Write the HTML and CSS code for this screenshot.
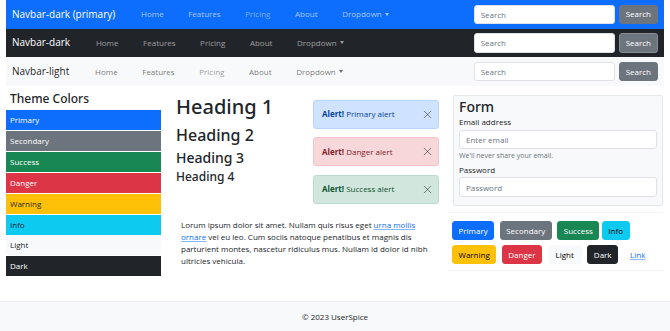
FILE: index.html
```html
<!DOCTYPE html>
<html lang="en">
<head>
<meta charset="utf-8">
<title>UserSpice Theme</title>
<link rel="stylesheet" href="styles.css">
</head>
<body>
<div class="page">
  <header class="navbars">
    <nav class="navbar navbar-primary">
      <a class="brand" href="#">Navbar-dark (primary)</a>
      <ul class="nav">
        <li><a class="nav-link" href="#">Home</a></li>
        <li><a class="nav-link" href="#">Features</a></li>
        <li><a class="nav-link disabled" href="#">Pricing</a></li>
        <li><a class="nav-link" href="#">About</a></li>
        <li><a class="nav-link caret" href="#">Dropdown</a></li>
      </ul>
      <form class="search">
        <input class="search-input" type="search" placeholder="Search">
        <button class="search-btn" type="button">Search</button>
      </form>
    </nav>
    <nav class="navbar navbar-dark">
      <a class="brand" href="#">Navbar-dark</a>
      <ul class="nav">
        <li><a class="nav-link" href="#">Home</a></li>
        <li><a class="nav-link" href="#">Features</a></li>
        <li><a class="nav-link" href="#">Pricing</a></li>
        <li><a class="nav-link" href="#">About</a></li>
        <li><a class="nav-link caret" href="#">Dropdown</a></li>
      </ul>
      <form class="search">
        <input class="search-input" type="search" placeholder="Search">
        <button class="search-btn" type="button">Search</button>
      </form>
    </nav>
    <nav class="navbar navbar-light">
      <a class="brand" href="#">Navbar-light</a>
      <ul class="nav">
        <li><a class="nav-link" href="#">Home</a></li>
        <li><a class="nav-link" href="#">Features</a></li>
        <li><a class="nav-link disabled" href="#">Pricing</a></li>
        <li><a class="nav-link" href="#">About</a></li>
        <li><a class="nav-link caret" href="#">Dropdown</a></li>
      </ul>
      <form class="search">
        <input class="search-input" type="search" placeholder="Search">
        <button class="search-btn" type="button">Search</button>
      </form>
    </nav>
  </header>

  <main class="main">
    <aside class="sidebar">
      <h4 class="sidebar-title">Theme Colors</h4>
      <div class="swatch bg-primary">Primary</div>
      <div class="swatch bg-secondary">Secondary</div>
      <div class="swatch bg-success">Success</div>
      <div class="swatch bg-danger">Danger</div>
      <div class="swatch bg-warning">Warning</div>
      <div class="swatch bg-info">Info</div>
      <div class="swatch bg-light">Light</div>
      <div class="swatch bg-dark">Dark</div>
    </aside>

    <section class="content">
      <div class="headings">
        <h1>Heading 1</h1>
        <h2>Heading 2</h2>
        <h3>Heading 3</h3>
        <h4>Heading 4</h4>
      </div>

      <div class="alerts">
        <div class="alert alert-primary"><span><strong>Alert!</strong> Primary alert</span><span class="close"><svg viewBox="0 0 10 10" width="9" height="9"><path d="M1 1L9 9M9 1L1 9" /></svg></span></div>
        <div class="alert alert-danger"><span><strong>Alert!</strong> Danger alert</span><span class="close"><svg viewBox="0 0 10 10" width="9" height="9"><path d="M1 1L9 9M9 1L1 9" /></svg></span></div>
        <div class="alert alert-success"><span><strong>Alert!</strong> Success alert</span><span class="close"><svg viewBox="0 0 10 10" width="9" height="9"><path d="M1 1L9 9M9 1L1 9" /></svg></span></div>
      </div>

      <form class="card">
        <h3 class="card-title">Form</h3>
        <label class="form-label">Email address</label>
        <input class="form-control" type="email" placeholder="Enter email">
        <div class="form-text">We'll never share your email.</div>
        <label class="form-label label-password">Password</label>
        <input class="form-control input-password" type="password" placeholder="Password">
      </form>

      <p class="lead-text">Lorum ipsum dolor sit amet. Nullam quis risus eget <a href="#">urna mollis ornare</a> vel eu leo. Cum sociis natoque penatibus et magnis dis parturient montes, nascetur ridiculus mus. Nullam id dolor id nibh ultricies vehicula.</p>

      <div class="buttons">
        <button class="btn btn-primary" type="button">Primary</button>
        <button class="btn btn-secondary" type="button">Secondary</button>
        <button class="btn btn-success" type="button">Success</button>
        <button class="btn btn-info" type="button">Info</button>
        <button class="btn btn-warning" type="button">Warning</button>
        <button class="btn btn-danger" type="button">Danger</button>
        <button class="btn btn-light" type="button">Light</button>
        <button class="btn btn-dark" type="button">Dark</button>
        <button class="btn btn-link" type="button">Link</button>
      </div>
    </section>
  </main>

  <footer class="footer">© 2023 UserSpice</footer>
</div>
</body>
</html>
```

FILE: styles.css
```css
* { box-sizing: border-box; }

html, body { margin: 0; padding: 0; }

body {
  font-family: "Open Sans", "Noto Sans", sans-serif;
  font-size: 8px;
  line-height: 1.5;
  color: #212529;
  background: #fff;
}

.page {
  min-height: 331px;
  display: flex;
  flex-direction: column;
}

/* ---------- navbars ---------- */
.navbar {
  display: flex;
  align-items: center;
  height: 28.67px;
  margin: 0 6px;
  padding: 0 6px;
}
.navbar-primary { background: #0d6efd; }
.navbar-dark { background: #212529; }
.navbar-light { background: #f8f9fa; }

.brand {
  font-size: 10px;
  line-height: 1.5;
  color: #fff;
  text-decoration: none;
  margin-right: 13.5px;
}
.navbar-light .brand { color: rgba(0, 0, 0, 0.9); }

.nav {
  display: flex;
  list-style: none;
  margin: 0;
  padding: 0;
}
.nav-link {
  display: block;
  padding: 0 12.3px;
  color: rgba(255, 255, 255, 0.55);
  text-decoration: none;
}
.navbar-primary .nav-link { color: rgba(255, 255, 255, 0.62); }
.navbar-primary .nav-link.disabled { color: rgba(255, 255, 255, 0.45); }
.navbar-light .nav-link { color: rgba(0, 0, 0, 0.55); }
.navbar-light .nav-link.disabled { color: rgba(0, 0, 0, 0.42); }

.caret::after {
  content: "";
  display: inline-block;
  margin-left: 3px;
  vertical-align: 1.5px;
  border-top: 3px solid;
  border-left: 2.5px solid transparent;
  border-right: 2.5px solid transparent;
}

.search {
  margin: 0 0 0 auto;
  display: flex;
  align-items: center;
}
.search-input {
  width: 141px;
  height: 19.5px;
  margin-right: 4px;
  padding: 0 6px;
  font: inherit;
  color: #212529;
  background: #fff;
  border: 1px solid #dee2e6;
  border-radius: 3px;
}
.search-input::placeholder { color: #6c757d; }
.search-btn {
  height: 19.5px;
  padding: 0 6px;
  font: inherit;
  color: #fff;
  background: #6c757d;
  border: 1px solid #6c757d;
  border-radius: 3px;
}
.navbar-dark .search-btn { border-color: #868e96; }

/* ---------- main ---------- */
.main {
  display: flex;
  align-items: flex-start;
  padding: 6px 6px 0 6px;
}

.sidebar {
  flex: none;
  width: 155px;
}
.sidebar-title,
.card-title,
.headings h1,
.headings h2,
.headings h3,
.headings h4 {
  font-family: "Noto Sans", "Open Sans", sans-serif;
  font-weight: 500;
  line-height: 1.2;
}
.sidebar-title {
  margin: 0 0 4px 4px;
  font-size: 12px;
}
.swatch {
  height: 20px;
  margin-bottom: 0.85px;
  padding-left: 4px;
  display: flex;
  align-items: center;
  color: #fff;
}
.bg-primary { background: #0d6efd; }
.bg-secondary { background: #6c757d; }
.bg-success { background: #198754; }
.bg-danger { background: #dc3545; }
.bg-warning { background: #ffc107; color: #212529; }
.bg-info { background: #0dcaf0; color: #212529; }
.bg-light { background: #f8f9fa; color: #212529; }
.bg-dark { background: #212529; }

.content {
  margin-left: 15px;
  padding-top: 3px;
  display: grid;
  grid-template-columns: 123px 126px 210px;
  column-gap: 14px;
  align-items: start;
}

.headings h1 { font-size: 20px; margin: 0 0 7px; }
.headings h2 { font-size: 16px; margin: 0 0 4.5px; }
.headings h3 { font-size: 14px; margin: 0 0 3.5px; }
.headings h4 { font-size: 12px; margin: 0; }

.alerts { margin-top: 5px; }
.alert {
  display: flex;
  align-items: center;
  justify-content: space-between;
  height: 29px;
  margin-bottom: 8.5px;
  padding: 0 6px 0 8px;
  border: 1px solid;
  border-radius: 3px;
}
.alert strong { font-weight: 700; }
.alert-primary { background: #cfe2ff; border-color: #b6d4fe; color: #084298; }
.alert-danger { background: #f8d7da; border-color: #f5c2c7; color: #842029; }
.alert-success { background: #d1e7dd; border-color: #badbcc; color: #0f5132; }
.close { display: flex; }
.close svg { stroke: #000; stroke-opacity: 0.5; stroke-width: 1; fill: none; }

.card {
  margin: 0;
  padding: 3px 5px 8px;
  background: #f8f9fa;
  border: 1px solid #e5e8eb;
  border-radius: 2px;
}
.card-title {
  margin: 0;
  font-size: 14px;
}
.form-label {
  display: block;
  margin-bottom: 2px;
}
.label-password { margin-top: 3px; margin-bottom: 1px; }
.form-control {
  display: block;
  width: 100%;
  height: 19.5px;
  padding: 0 6px;
  font: inherit;
  color: #212529;
  background: #fff;
  border: 1px solid #dee2e6;
  border-radius: 3px;
}
.form-control::placeholder { color: #6c757d; }
.form-text {
  margin-top: 1.5px;
  font-size: 7px;
  color: #6c757d;
}

.lead-text {
  grid-column: 1 / 3;
  margin: 7px 0 0 5px;
  width: 248px;
  line-height: 12px;
}
.lead-text a {
  color: #0d6efd;
  text-decoration: underline;
  text-decoration-color: rgba(13, 110, 253, 0.5);
}

.buttons {
  margin-left: -5px;
  width: 215px;
  padding: 8px 4px 6px 4px;
  border-top: 1px solid #f1f3f5;
  border-bottom: 1px solid #f1f3f5;
  display: flex;
  flex-wrap: wrap;
  column-gap: 5.5px;
  row-gap: 4.5px;
}
.btn {
  height: 19px;
  padding: 0 5.5px;
  font: inherit;
  line-height: 17px;
  border: 1px solid transparent;
  border-radius: 3px;
  color: #fff;
}
.btn-primary { background: #0d6efd; border-color: #0d6efd; }
.btn-secondary { background: #6c757d; border-color: #6c757d; }
.btn-success { background: #198754; border-color: #198754; }
.btn-info { background: #0dcaf0; border-color: #0dcaf0; color: #000; margin-left: -3px; }
.btn-warning { background: #ffc107; border-color: #ffc107; color: #000; }
.btn-danger { background: #dc3545; border-color: #dc3545; }
.btn-light { background: #f8f9fa; border-color: #f8f9fa; color: #000; padding: 0 7px; }
.btn-dark { background: #212529; border-color: #212529; }
.btn-link { background: none; color: #0d6efd; text-decoration: underline; text-decoration-color: rgba(13, 110, 253, 0.5); }

/* ---------- footer ---------- */
.footer {
  margin-top: auto;
  height: 30px;
  display: flex;
  align-items: center;
  justify-content: center;
  background: #f8f9fa;
  border-top: 1px solid #e9ecef;
  font-size: 8px;
}
```
